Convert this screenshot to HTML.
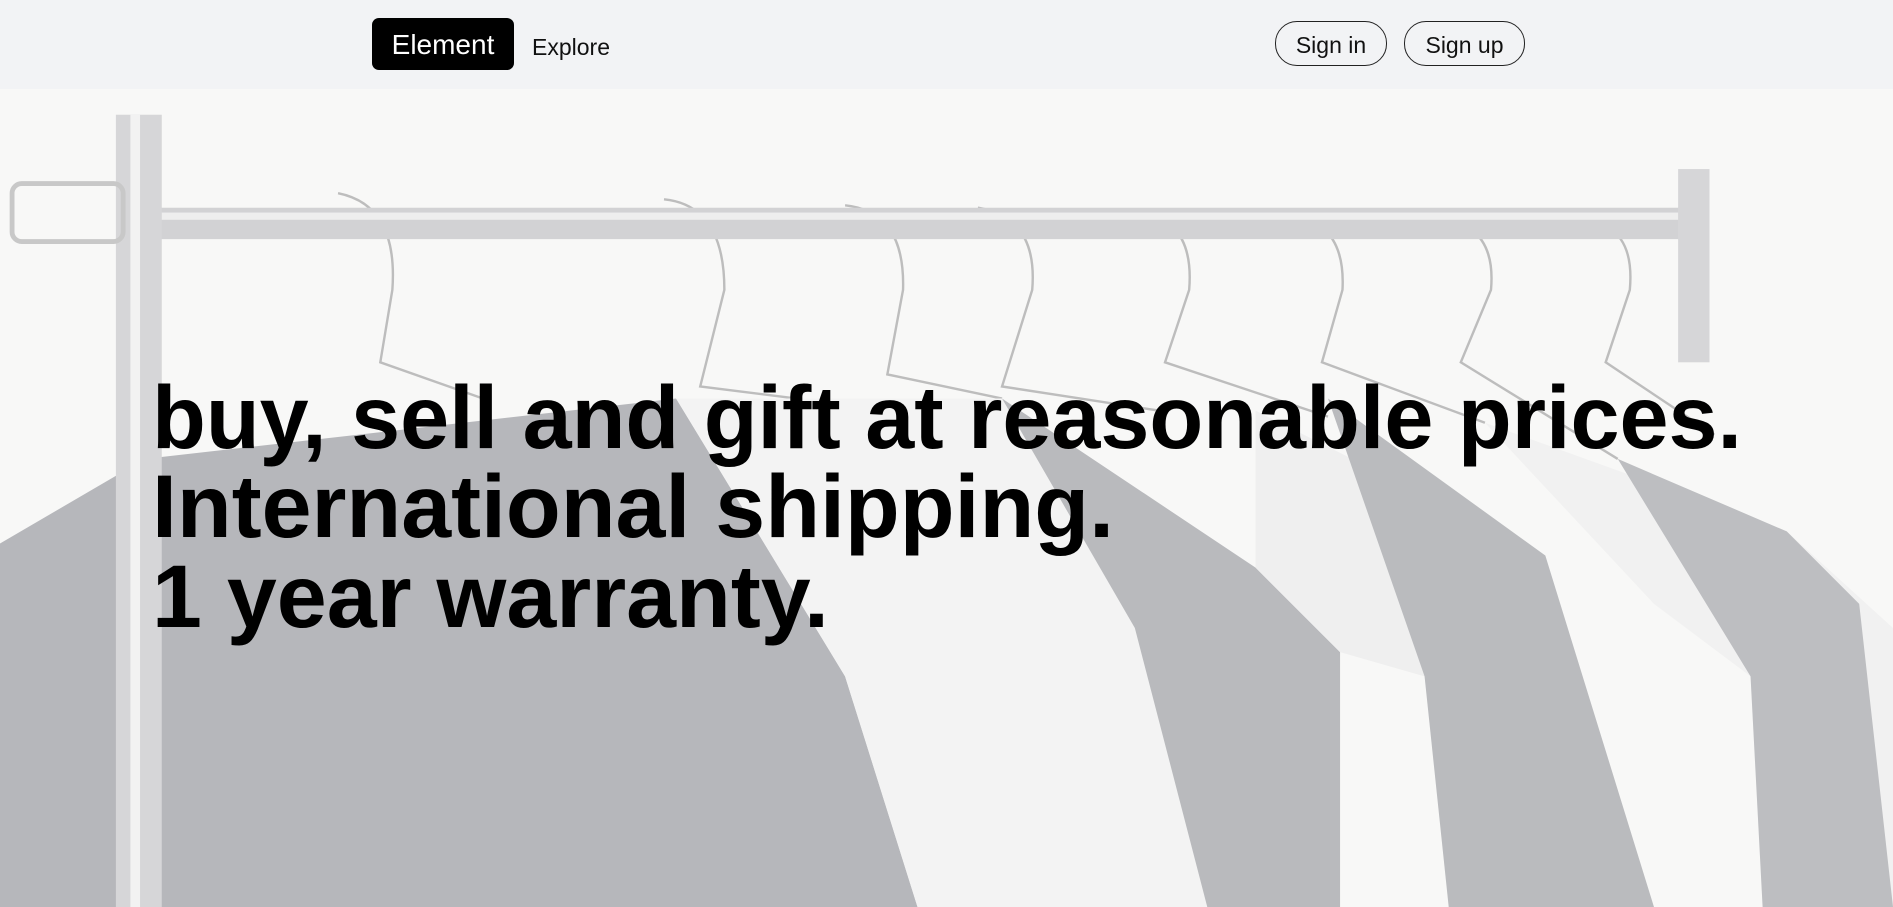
<!DOCTYPE html>
<html><head><meta charset="utf-8"><style>
html,body{margin:0;padding:0;width:1893px;height:907px;overflow:hidden;font-family:"Liberation Sans",sans-serif;}
body{background:#f7f7f7;position:relative}
.bg{position:absolute;left:0;top:0;width:1893px;height:907px}
nav{position:absolute;left:0;top:0;width:1893px;height:89px;background:#f2f3f5}
.el{position:absolute;left:372px;top:18px;width:142px;height:52px;background:#000;color:#fff;border-radius:7px;font-size:28px;line-height:54px;text-align:center}
.ex{position:absolute;left:532px;top:19px;line-height:56px;font-size:23px;color:#111}
.btn{position:absolute;top:21px;height:43px;border:1px solid #222;border-radius:22px;font-size:23px;line-height:46px;text-align:center;color:#111}
.hd{position:absolute;left:0;top:0}
</style></head><body>
<svg class="bg" viewBox="0 0 1568 751" preserveAspectRatio="none">
<rect x="0" y="0" width="1568" height="751" fill="#f8f8f7"/>
<g fill="none" stroke="#bdbdbd" stroke-width="2">
<path d="M280,160 Q330,170 325,240 L315,300 L400,330"/>
<path d="M550,165 Q600,170 600,240 L580,320 L660,330"/>
<path d="M700,170 Q750,175 748,240 L735,310 L830,330"/>
<path d="M810,172 Q860,180 855,240 L830,320 L960,340"/>
<path d="M940,175 Q990,180 985,240 L965,300 L1100,345"/>
<path d="M1070,178 Q1115,185 1112,240 L1095,300 L1230,350"/>
<path d="M1190,180 Q1240,185 1235,240 L1210,300 L1340,380"/>
<path d="M1310,182 Q1355,185 1350,240 L1330,300 L1420,360"/>
</g>
<polygon points="0,450 120,380 560,330 700,560 760,751 0,751" fill="#b6b7bb"/>
<polygon points="560,330 830,330 940,520 1000,751 760,751 700,560" fill="#f3f3f3"/>
<polygon points="830,330 1040,470 1110,540 1110,751 1000,751 940,520" fill="#b9babd"/>
<polygon points="1040,340 1280,460 1370,751 1200,751 1180,560 1110,540 1040,470" fill="#efefef"/>
<polygon points="1100,330 1280,460 1370,751 1200,751 1180,560" fill="#babbbe"/>
<polygon points="1230,350 1480,440 1568,520 1568,751 1460,751 1450,560 1370,500" fill="#f1f1f1"/>
<polygon points="1340,380 1480,440 1540,500 1568,751 1460,751 1450,560" fill="#bdbec1"/>
<rect x="130" y="172" width="1280" height="26" fill="#d2d2d4"/>
<rect x="130" y="176" width="1280" height="6" fill="#eeeeee"/>
<rect x="96" y="95" width="38" height="656" fill="#d6d6d8"/>
<rect x="108" y="95" width="8" height="656" fill="#f2f2f2"/>
<rect x="1390" y="140" width="26" height="160" fill="#d6d6d8"/>
<rect x="10" y="152" width="92" height="48" rx="8" fill="none" stroke="#c8c8c8" stroke-width="4"/>
</svg>
<svg class="hd" width="1893" height="907">
<g font-family="Liberation Sans, sans-serif" font-weight="bold" font-size="89" fill="#000">
<text x="152" y="448" textLength="1590" lengthAdjust="spacingAndGlyphs">buy, sell and gift at reasonable prices.</text>
<text x="152" y="537" textLength="962" lengthAdjust="spacingAndGlyphs">International shipping.</text>
<text x="152" y="627" textLength="677" lengthAdjust="spacingAndGlyphs">1 year warranty.</text>
</g></svg>
<nav>
<div class="el">Element</div>
<div class="ex">Explore</div>
<div class="btn" style="left:1275px;width:110px">Sign in</div>
<div class="btn" style="left:1404px;width:119px">Sign up</div>
</nav>
</body></html>
